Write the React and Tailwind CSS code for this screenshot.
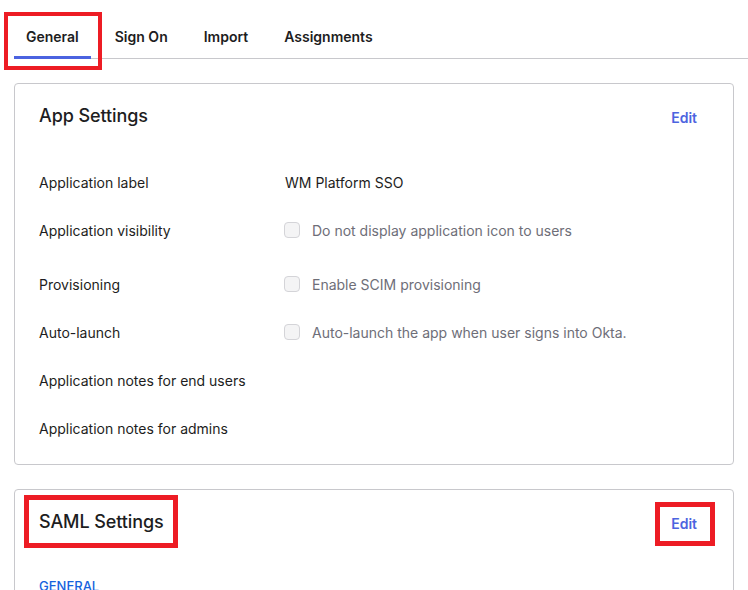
import React from "react";

const tabs = ["General", "Sign On", "Import", "Assignments"];

function Checkbox() {
  return (
    <span className="inline-block w-[16px] h-[16px] rounded-[4px] border border-[#d4d4d8] bg-[#f4f4f5] shrink-0" />
  );
}

function Row({ label, children, className = "" }) {
  return (
    <div className={"flex items-center h-[48px] px-[24px] " + className}>
      <div className="w-[246px] text-[14px] text-[#1d1d21]">{label}</div>
      <div className="flex items-center text-[14px]">{children}</div>
    </div>
  );
}

function CheckValue({ text }) {
  return (
    <div className="flex items-center gap-[12px] -ml-[1px]">
      <Checkbox />
      <span className="text-[#6e6e78]">{text}</span>
    </div>
  );
}

function CardHeader({ title }) {
  return (
    <div className="flex justify-between items-start h-[74px] pt-[20px] pl-[24px] pr-[36px]">
      <h2 className="text-[18px] leading-[24px] font-medium text-[#1d1d21] tracking-[-0.1px]">{title}</h2>
      <button className="mt-[4px] text-[14px] leading-[20px] font-semibold text-[#4c64e0]">Edit</button>
    </div>
  );
}

export default function App() {
  return (
    <div
      className="relative w-[748px] h-[590px] overflow-hidden bg-white"
      style={{ fontFamily: "Inter, 'Noto Sans', sans-serif" }}
    >
      <div className="ml-[14px] flex gap-[12px] h-[59px] border-b border-[#c8c8cc]">
        {tabs.map((t, i) => (
          <div
            key={t}
            className={
              "px-[12px] pt-[27px] h-[59px] text-[14px] leading-[20px] font-semibold text-[#1d1d21] " +
              (i === 0 ? "border-b-[3px] border-[#4b63e0]" : "")
            }
          >
            {t}
          </div>
        ))}
      </div>

      <div className="mx-[14px] mt-[24px] w-[720px] border border-[#c8c8cc] rounded-[4px]">
        <CardHeader title="App Settings" />
        <Row label="Application label">
          <span className="text-[#1d1d21]">WM Platform SSO</span>
        </Row>
        <Row label="Application visibility">
          <CheckValue text="Do not display application icon to users" />
        </Row>
        <Row label="Provisioning" className="mt-[6px]">
          <CheckValue text="Enable SCIM provisioning" />
        </Row>
        <Row label="Auto-launch">
          <CheckValue text="Auto-launch the app when user signs into Okta." />
        </Row>
        <Row label="Application notes for end users" />
        <Row label="Application notes for admins" />
        <div className="h-[12px]" />
      </div>

      <div className="mx-[14px] mt-[24px] w-[720px] h-[200px] border border-[#c8c8cc] rounded-[4px]">
        <CardHeader title="SAML Settings" />
        <div className="pl-[24px] mt-[13px] text-[13px] leading-[18px] font-medium text-[#1662dd] uppercase">
          General
        </div>
      </div>

      {/* red annotation boxes */}
      <div className="absolute left-[4px] top-[12px] w-[98px] h-[58px] border-[4px] border-[#ed1c24]" />
      <div className="absolute left-[24px] top-[495px] w-[154px] h-[53px] border-[5px] border-[#ed1c24]" />
      <div className="absolute left-[655px] top-[502px] w-[60px] h-[44px] border-[5px] border-[#ed1c24]" />
    </div>
  );
}
